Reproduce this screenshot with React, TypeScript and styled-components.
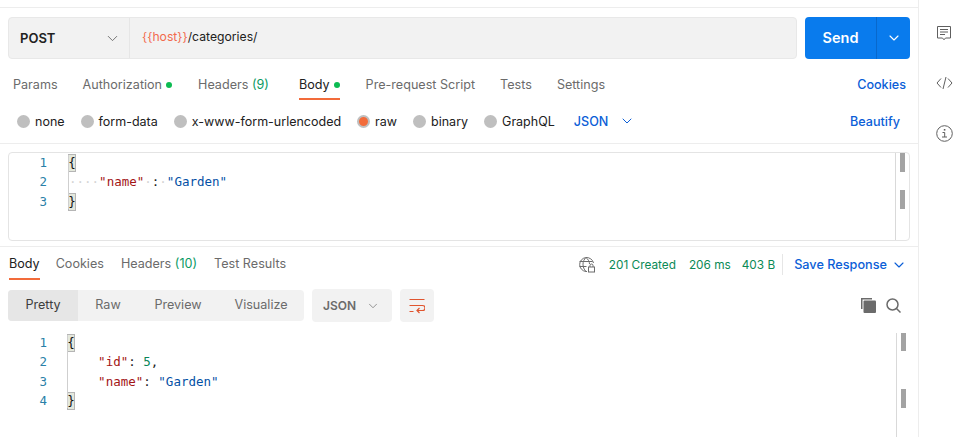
import React from 'react';
import styled, { createGlobalStyle } from 'styled-components';
import { ChevronDown } from 'lucide-react';

const GlobalStyle = createGlobalStyle`
  html, body { margin: 0; padding: 0; background: #fff; overflow: hidden; }
  body { font-family: Inter, "Liberation Sans", sans-serif; font-size: 13px; color: #212121; }
  * { box-sizing: border-box; }
`;

const Page = styled.div`
  display: flex;
  width: 967px;
  height: 437px;
  overflow: hidden;
`;

const Main = styled.main`
  width: 919px;
  height: 437px;
  border-right: 1px solid #ededed;
  padding-top: 7px;
`;

const RequestPane = styled.section`
  border-top: 1px solid #ededed;
  border-bottom: 1px solid #ededed;
  height: 137px;
  padding: 9px 8px 0;
`;

const UrlRow = styled.div`
  display: flex;
  gap: 8px;
  height: 42px;
`;

const UrlBox = styled.div`
  flex: 1;
  display: flex;
  background: #f2f2f2;
  border: 1px solid #e8e8e8;
  border-radius: 4px;
`;

const Method = styled.div`
  width: 121px;
  display: flex;
  align-items: center;
  justify-content: space-between;
  padding: 0 8px 0 11px;
  border-right: 1px solid #e6e6e6;
  font-size: 13px;
  font-weight: 600;
  color: #212121;
`;

const UrlText = styled.div`
  padding: 0 12px;
  line-height: 37px;
  font-size: 12.2px;
  color: #212121;
`;

const Variable = styled.span`
  color: #f26b4e;
`;

const SendGroup = styled.div`
  width: 105px;
  display: flex;
  background: #097bed;
  border-radius: 4px;
  color: #fff;
`;

const SendLabel = styled.div`
  width: 72px;
  border-right: 1px solid #0868cc;
  text-align: center;
  line-height: 42px;
  font-size: 14.5px;
  font-weight: 600;
`;

const SendCaret = styled.div`
  flex: 1;
  display: flex;
  align-items: center;
  justify-content: center;
`;

const TabRow = styled.nav`
  display: flex;
  align-items: flex-start;
  height: 41px;
  padding: 18px 4px 0 5px;
`;

const Tab = styled.div<{ $active?: boolean; $gap?: number }>`
  height: 23px;
  margin-right: ${(p) => p.$gap ?? 25}px;
  font-size: 12.6px;
  line-height: 16px;
  white-space: nowrap;
  color: ${(p) => (p.$active ? '#212121' : '#6b6b6b')};
  border-bottom: 2px solid ${(p) => (p.$active ? '#f26b3a' : 'transparent')};
`;

const Count = styled.span`
  color: #0a9a64;
`;

const Dot = styled.span`
  display: inline-block;
  width: 6px;
  height: 6px;
  margin-left: 4px;
  border-radius: 50%;
  background: #0cbb52;
  vertical-align: 1px;
`;

const TabLink = styled.div`
  margin-left: auto;
  font-size: 12.6px;
  line-height: 16px;
  font-weight: 500;
  color: #0b5ed7;
`;

const BodyTypes = styled.div`
  display: flex;
  align-items: center;
  height: 42px;
  padding: 0 10px 0 9px;
`;

const RadioItem = styled.label`
  display: flex;
  align-items: center;
  gap: 5px;
  margin-right: 16px;
  font-size: 12.5px;
  color: #212121;
  white-space: nowrap;
`;

const RadioMark = styled.span<{ $checked?: boolean }>`
  width: 13px;
  height: 13px;
  border-radius: 50%;
  background: ${(p) => (p.$checked ? '#f26b3a' : '#bfbfbf')};
  border: ${(p) => (p.$checked ? '2px solid #bfbfbf' : 'none')};
`;

const LangPicker = styled.div`
  display: flex;
  align-items: center;
  gap: 11px;
  margin-left: 3px;
  font-size: 12.6px;
  font-weight: 500;
  color: #0b5ed7;
`;

const Beautify = styled.div`
  margin-left: auto;
  font-size: 12.6px;
  font-weight: 500;
  color: #0b5ed7;
`;

const EditorFrame = styled.div`
  position: relative;
  height: 89px;
  margin: 8px 8px 0;
  border: 1px solid #e4e4e4;
  border-radius: 4px;
`;

const CodeBlock = styled.div<{ $top: number; $gutter: number }>`
  display: grid;
  grid-template-columns: ${(p) => p.$gutter}px 1fr;
  padding-top: ${(p) => p.$top}px;
  font-family: "DejaVu Sans Mono", "Liberation Mono", monospace;
  font-size: 12.5px;
  line-height: 19.3px;
`;

const LineNo = styled.div`
  text-align: right;
  color: #2a7fa8;
  white-space: pre;
`;

const CodeLines = styled.div<{ $guide: number }>`
  position: relative;
  padding-left: ${(p) => p.$guide}px;
  white-space: pre;
  color: #212121;
  &::before {
    content: '';
    position: absolute;
    left: ${(p) => p.$guide - 1}px;
    top: 2px;
    bottom: 2px;
    width: 1px;
    background: #cfcfcf;
  }
`;

const Bracket = styled.span`
  display: inline-block;
  width: 8px;
  height: 18px;
  margin-left: -1px;
  line-height: 17px;
  background: #e4e8dc;
  outline: 1px solid #b5b5b5;
  outline-offset: -1px;
  text-align: center;
  color: #111;
`;

const KeyName = styled.span`
  color: #a31515;
`;

const StringValue = styled.span`
  color: #0451a5;
`;

const NumberValue = styled.span`
  color: #098658;
`;

const Whitespace = styled.span`
  color: #d5d5d5;
`;

const ScrollTrack = styled.div<{ $top: number; $left: number; $height: number }>`
  position: absolute;
  top: ${(p) => p.$top}px;
  left: ${(p) => p.$left}px;
  width: 14px;
  height: ${(p) => p.$height}px;
  border-left: 1px solid #d9d9d9;
`;

const ScrollThumb = styled.div<{ $top: number; $height: number }>`
  position: absolute;
  left: 4px;
  top: ${(p) => p.$top}px;
  width: 5px;
  height: ${(p) => p.$height}px;
  background: #a3a3a3;
`;

const ResponsePane = styled.section`
  position: relative;
  margin-top: 5px;
  border-top: 1px solid #ededed;
  height: 191px;
`;

const ResponseTabs = styled.div`
  display: flex;
  align-items: flex-start;
  height: 33px;
  padding: 9px 11px 0 9px;
`;

const ResponseTab = styled(Tab)`
  height: 24px;
`;

const Meta = styled.div`
  margin-left: auto;
  display: flex;
  align-items: center;
  height: 17px;
  font-size: 11.8px;
  color: #0a8a56;
  white-space: nowrap;
`;

const MetaItem = styled.span<{ $gap: number }>`
  margin-left: ${(p) => p.$gap}px;
`;

const SaveResponse = styled.div`
  display: flex;
  align-items: center;
  gap: 4px;
  height: 21px;
  margin-left: 7px;
  padding-left: 11px;
  border-left: 1px solid #e6e6e6;
  font-size: 12.7px;
  font-weight: 500;
  color: #0b5ed7;
`;

const ResponseToolbar = styled.div`
  display: flex;
  align-items: center;
  gap: 8px;
  height: 31px;
  margin-top: 10px;
  padding: 0 17px 0 8px;
`;

const Segments = styled.div`
  display: flex;
  height: 31px;
  background: #f2f2f2;
  border-radius: 4px;
  overflow: hidden;
`;

const Segment = styled.div<{ $active?: boolean; $width: number }>`
  width: ${(p) => p.$width}px;
  text-align: center;
  line-height: 30px;
  font-size: 12.6px;
  color: ${(p) => (p.$active ? '#3d3d3d' : '#6b6b6b')};
  background: ${(p) => (p.$active ? '#e6e6e6' : 'transparent')};
`;

const FormatPicker = styled.div`
  display: flex;
  align-items: center;
  justify-content: space-between;
  width: 80px;
  height: 33px;
  padding: 0 12px 0 11px;
  background: #f2f2f2;
  border-radius: 4px;
  font-size: 12px;
  font-weight: 600;
  color: #6b6b6b;
`;

const WrapButton = styled.div`
  display: flex;
  align-items: center;
  justify-content: center;
  width: 34px;
  height: 33px;
  background: #f2f2f2;
  border-radius: 4px;
`;

const ToolIcons = styled.div`
  display: flex;
  align-items: center;
  gap: 10px;
  margin-left: auto;
`;

const SideBar = styled.aside`
  flex: 1;
  display: flex;
  flex-direction: column;
  align-items: center;
  gap: 35px;
  padding-top: 25px;
  padding-left: 2px;
`;

const CommentIcon = () => (
  <svg width="16" height="16" viewBox="0 0 16 16" fill="none" stroke="#5f5f5f" strokeWidth="1">
    <path d="M1.500 1.500h13v11.500H9.500L8 14.800 6.500 13h-5z" />
    <path d="M4 4.500h8M4 7h8M4 9.500h5" />
  </svg>
);

const CodeIcon = () => (
  <svg width="17" height="14" viewBox="0 0 17 14" fill="none" stroke="#5f5f5f" strokeWidth="1">
    <path d="M5 2.500 1 7l4 4.500M12 2.500 16 7l-4 4.500M10 1 7 13" />
  </svg>
);

const InfoIcon = () => (
  <svg width="17" height="17" viewBox="0 0 17 17" fill="none" stroke="#5f5f5f" strokeWidth="1">
    <circle cx="8.500" cy="8.500" r="7.800" />
    <path d="M6.500 7.500h2.200v4.500M6 12h5" />
    <path d="M7.800 4h1.600v1.600H7.800z" fill="#5f5f5f" stroke="none" />
  </svg>
);

const GlobeLockIcon = () => (
  <svg width="18" height="17" viewBox="0 0 18 17" fill="none" stroke="#6b6b6b" strokeWidth="1">
    <path d="M9 15.500H8A7 7 0 1 1 15.500 7" />
    <path d="M1.500 5.500h13M1.500 10.500h7M8 1.500c-4 3.500-4 10 0 14M8 1.500c2.500 2 3.500 4.500 3.500 6.500" />
    <rect x="10.500" y="11" width="6" height="5" fill="#fff" />
    <path d="M12 11V9.500a1.500 1.500 0 0 1 3 0V11" />
  </svg>
);

const WrapIcon = () => (
  <svg width="16" height="16" viewBox="0 0 16 16" fill="none" stroke="#e0552f" strokeWidth="1.200">
    <path d="M0.500 1.500h15M0.500 7.500h13a2 2 0 0 1 0 5H8M0.500 13.500h4" />
    <path d="M10.500 10 8 12.500l2.500 2.500" />
  </svg>
);

const CopyIcon = () => (
  <svg width="15" height="15" viewBox="0 0 15 15" fill="#6b6b6b">
    <path d="M0 0h11v1.500H1.500V11H0z" />
    <rect x="2.500" y="2.500" width="12.500" height="12.500" rx="1" />
  </svg>
);

const SearchIcon = () => (
  <svg width="15" height="15" viewBox="0 0 15 15" fill="none" stroke="#6b6b6b" strokeWidth="1.500">
    <circle cx="6.500" cy="6.500" r="5.500" />
    <path d="m10.500 10.500 4 4" />
  </svg>
);

const requestTabs = [
  { label: 'Params', gap: 25 },
  { label: 'Authorization', dot: true, gap: 26 },
  { label: 'Headers', count: '(9)', gap: 30 },
  { label: 'Body', dot: true, active: true, gap: 26 },
  { label: 'Pre-request Script', gap: 25 },
  { label: 'Tests', gap: 25 },
  { label: 'Settings', gap: 0 },
];

const bodyTypes = ['none', 'form-data', 'x-www-form-urlencoded', 'raw', 'binary', 'GraphQL'];

const responseTabs = [
  { label: 'Body', active: true, gap: 16 },
  { label: 'Cookies', gap: 17 },
  { label: 'Headers', count: '(10)', gap: 17 },
  { label: 'Test Results', gap: 17 },
];

const segments = [
  { label: 'Pretty', width: 70, active: true },
  { label: 'Raw', width: 60 },
  { label: 'Preview', width: 80 },
  { label: 'Visualize', width: 86 },
];

export default function App() {
  return (
    <Page>
      <GlobalStyle />
      <Main>
        <RequestPane>
          <UrlRow>
            <UrlBox>
              <Method>
                POST
                <ChevronDown size={17} strokeWidth={1.300} color="#6b6b6b" />
              </Method>
              <UrlText>
                <Variable>{'{{host}}'}</Variable>/categories/
              </UrlText>
            </UrlBox>
            <SendGroup>
              <SendLabel>Send</SendLabel>
              <SendCaret>
                <ChevronDown size={16} strokeWidth={1.700} />
              </SendCaret>
            </SendGroup>
          </UrlRow>
          <TabRow>
            {requestTabs.map((t) => (
              <Tab key={t.label} $active={t.active} $gap={t.gap}>
                {t.label}
                {t.count && <Count> {t.count}</Count>}
                {t.dot && <Dot />}
              </Tab>
            ))}
            <TabLink>Cookies</TabLink>
          </TabRow>
          <BodyTypes>
            {bodyTypes.map((b) => (
              <RadioItem key={b}>
                <RadioMark $checked={b === 'raw'} />
                {b}
              </RadioItem>
            ))}
            <LangPicker>
              JSON
              <ChevronDown size={16} strokeWidth={1.500} />
            </LangPicker>
            <Beautify>Beautify</Beautify>
          </BodyTypes>
        </RequestPane>
        <EditorFrame>
          <CodeBlock $top={0} $gutter={38}>
            <LineNo>{'1\n2\n3'}</LineNo>
            <CodeLines $guide={22}>
              <Bracket>{'{'}</Bracket>
              {'\n'}
              <Whitespace>{'····'}</Whitespace>
              <KeyName>"name"</KeyName>
              <Whitespace>·</Whitespace>:<Whitespace>·</Whitespace>
              <StringValue>"Garden"</StringValue>
              {'\n'}
              <Bracket>{'}'}</Bracket>
            </CodeLines>
          </CodeBlock>
          <ScrollTrack $top={0} $left={886} $height={87}>
            <ScrollThumb $top={0} $height={19} />
            <ScrollThumb $top={37} $height={19} />
          </ScrollTrack>
        </EditorFrame>
        <ResponsePane>
          <ResponseTabs>
            {responseTabs.map((t) => (
              <ResponseTab key={t.label} $active={t.active} $gap={t.gap}>
                {t.label}
                {t.count && <Count> {t.count}</Count>}
              </ResponseTab>
            ))}
            <Meta>
              <GlobeLockIcon />
              <MetaItem $gap={13}>201 Created</MetaItem>
              <MetaItem $gap={13}>206 ms</MetaItem>
              <MetaItem $gap={11}>403 B</MetaItem>
              <SaveResponse>
                Save Response
                <ChevronDown size={16} strokeWidth={1.700} />
              </SaveResponse>
            </Meta>
          </ResponseTabs>
          <ResponseToolbar>
            <Segments>
              {segments.map((s) => (
                <Segment key={s.label} $active={s.active} $width={s.width}>
                  {s.label}
                </Segment>
              ))}
            </Segments>
            <FormatPicker>
              JSON
              <ChevronDown size={14} strokeWidth={1.200} color="#6b6b6b" />
            </FormatPicker>
            <WrapButton>
              <WrapIcon />
            </WrapButton>
            <ToolIcons>
              <CopyIcon />
              <SearchIcon />
            </ToolIcons>
          </ResponseToolbar>
          <CodeBlock $top={12} $gutter={47}>
            <LineNo>{'1\n2\n3\n4'}</LineNo>
            <CodeLines $guide={21}>
              <Bracket>{'{'}</Bracket>
              {'\n    '}
              <KeyName>"id"</KeyName>: <NumberValue>5</NumberValue>,{'\n    '}
              <KeyName>"name"</KeyName>: <StringValue>"Garden"</StringValue>
              {'\n'}
              <Bracket>{'}'}</Bracket>
            </CodeLines>
          </CodeBlock>
          <ScrollTrack $top={86} $left={896} $height={105}>
            <ScrollThumb $top={0} $height={18} />
            <ScrollThumb $top={56} $height={19} />
          </ScrollTrack>
        </ResponsePane>
      </Main>
      <SideBar>
        <CommentIcon />
        <CodeIcon />
        <InfoIcon />
      </SideBar>
    </Page>
  );
}
